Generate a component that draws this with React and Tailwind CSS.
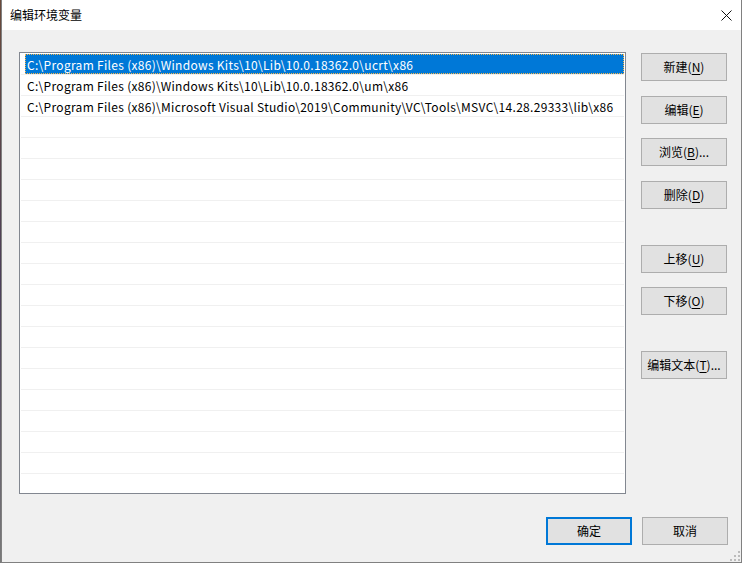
import React from "react";

const rows = [
  "C:\\Program Files (x86)\\Windows Kits\\10\\Lib\\10.0.18362.0\\ucrt\\x86",
  "C:\\Program Files (x86)\\Windows Kits\\10\\Lib\\10.0.18362.0\\um\\x86",
  "C:\\Program Files (x86)\\Microsoft Visual Studio\\2019\\Community\\VC\\Tools\\MSVC\\14.28.29333\\lib\\x86",
];

const Btn = ({ label, hot, tail = "", className = "", primary = false }) => (
  <button
    className={`w-[86px] h-[28px] flex items-center justify-center text-[12px] text-black bg-[#e1e1e1] ${
      primary ? "border-2 border-[#0078d7]" : "border border-[#adadad]"
    } ${className}`}
  >
    {label}
    {hot && (
      <>
        (<span className="underline underline-offset-2">{hot}</span>)
      </>
    )}
    {tail}
  </button>
);

export default function App() {
  const list = Array.from({ length: 20 }, (_, i) => rows[i] || "");

  return (
    <div
      className="w-[742px] h-[563px] flex bg-[#f0f0f0] overflow-hidden"
      style={{ fontFamily: '"Noto Sans CJK SC", "Noto Sans", sans-serif' }}
    >
      <div className="w-px h-full bg-gradient-to-b from-[#6a4a3a] via-[#4b3f5a] to-[#7a7a7a]" />
      <div className="flex-1 flex flex-col border-r border-b border-l border-[#808080] bg-[#f0f0f0]">
        {/* title bar */}
        <div className="h-[30px] bg-white flex items-center justify-between pl-[8px] pr-[9px]">
          <span className="text-[12px] text-black">编辑环境变量</span>
          <svg width="11" height="11" viewBox="0 0 11 11" className="mt-px">
            <path d="M0.5 0.5L10.5 10.5M10.5 0.5L0.5 10.5" stroke="#111" strokeWidth="1" />
          </svg>
        </div>

        {/* body */}
        <div className="flex pt-[22px] pl-[17px] pr-[13px]">
          <div className="w-[607px] h-[442px] border border-[#828790] bg-white pt-px">
            {list.map((text, i) => (
              <div
                key={i}
                className="h-[21px] ml-px mr-px border-b border-[#f0f0f0] flex items-center"
              >
                {i === 0 ? (
                  <div className="ml-[4px] flex-1 h-[20px] bg-[#0078d7] text-white text-[12px] leading-[21px] tracking-[0.3px] pl-[2px] outline-1 outline-dotted outline-[#f7b54a] -outline-offset-1 whitespace-nowrap">
                    {text}
                  </div>
                ) : (
                  <div className="ml-[6px] text-[12px] leading-[21px] tracking-[0.3px] text-black whitespace-nowrap">
                    {text}
                  </div>
                )}
              </div>
            ))}
          </div>

          <div className="ml-[15px] flex flex-col pt-px">
            <Btn label="新建" hot="N" />
            <Btn label="编辑" hot="E" className="mt-[15px]" />
            <Btn label="浏览" hot="B" tail="..." className="mt-[14px]" />
            <Btn label="删除" hot="D" className="mt-[15px]" />
            <Btn label="上移" hot="U" className="mt-[36px]" />
            <Btn label="下移" hot="O" className="mt-[14px]" />
            <Btn label="编辑文本" hot="T" tail="..." className="mt-[36px]" />
          </div>
        </div>

        {/* footer */}
        <div className="flex justify-end gap-[10px] pr-[13px] mt-[23px]">
          <Btn label="确定" primary />
          <Btn label="取消" />
        </div>

        <div className="flex-1 flex items-end justify-end pr-px pb-px">
          <svg width="10" height="10" viewBox="0 0 10 10">
            <g fill="#bcbcbc">
              <rect x="8" y="0" width="2" height="2" />
              <rect x="4" y="4" width="2" height="2" />
              <rect x="8" y="4" width="2" height="2" />
              <rect x="0" y="8" width="2" height="2" />
              <rect x="4" y="8" width="2" height="2" />
              <rect x="8" y="8" width="2" height="2" />
            </g>
          </svg>
        </div>
      </div>
    </div>
  );
}
